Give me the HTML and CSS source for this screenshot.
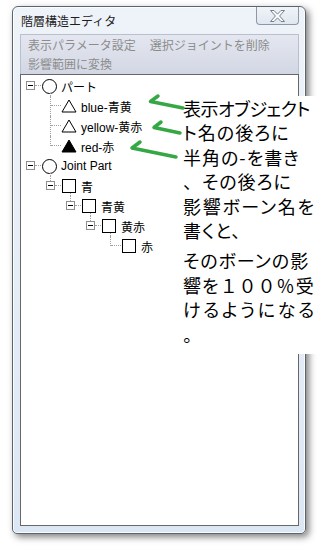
FILE: index.html
```html
<!DOCTYPE html>
<html lang="ja">
<head>
    <meta charset="UTF-8">
    <meta name="viewport" content="width=device-width, initial-scale=1.0">
    <title>階層構造エディタ</title>
    <link rel="stylesheet" href="styles.css">
</head>
<body>
    <div class="page">
        <div class="window">
            <div class="titlebar">
                <span class="title">階層構造エディタ</span>
                <button class="close" aria-label="閉じる">
                    <svg width="15" height="12" viewBox="0 0 15 12">
                        <polygon points="0.5,0.5 4,0.5 7.5,4.1 11,0.5 14.5,0.5 9.6,6 14.5,11.5 11,11.5 7.5,7.9 4,11.5 0.5,11.5 5.4,6" fill="#f7f9fb" stroke="#76808d" stroke-width="1" stroke-linejoin="round"/>
                    </svg>
                </button>
            </div>

            <div class="client">
                <div class="menubar">
                    <span class="menu-item">表示パラメータ設定</span>
                    <span class="menu-item">選択ジョイントを削除</span>
                    <span class="menu-item">影響範囲に変換</span>
                </div>

                <ul class="tree">
                    <li class="node lv0 open">
                        <span class="branch root"><span class="box"></span></span>
                        <span class="icon"><span class="circle"></span></span>
                        <span class="label">パート</span>
                    </li>
                    <li class="node lv1">
                        <span class="branch leaf mid"></span>
                        <span class="icon">
                            <svg width="16" height="14" viewBox="0 0 16 14"><polygon points="8,1 15,13 1,13" fill="#fff" stroke="#000" stroke-width="1"/></svg>
                        </span>
                        <span class="label">blue-青黄</span>
                    </li>
                    <li class="node lv1">
                        <span class="branch leaf mid"></span>
                        <span class="icon">
                            <svg width="16" height="14" viewBox="0 0 16 14"><polygon points="8,1 15,13 1,13" fill="#fff" stroke="#000" stroke-width="1"/></svg>
                        </span>
                        <span class="label">yellow-黄赤</span>
                    </li>
                    <li class="node lv1">
                        <span class="branch leaf"></span>
                        <span class="icon">
                            <svg width="16" height="14" viewBox="0 0 16 14"><polygon points="8,1 15,13 1,13" fill="#000" stroke="#000" stroke-width="1"/></svg>
                        </span>
                        <span class="label">red-赤</span>
                    </li>
                    <li class="node lv0 open">
                        <span class="branch root"><span class="box"></span></span>
                        <span class="icon"><span class="circle"></span></span>
                        <span class="label">Joint Part</span>
                    </li>
                    <li class="node lv1 open">
                        <span class="branch sub"><span class="box"></span></span>
                        <span class="icon"><span class="square"></span></span>
                        <span class="label">青</span>
                    </li>
                    <li class="node lv2 open">
                        <span class="branch sub"><span class="box"></span></span>
                        <span class="icon"><span class="square"></span></span>
                        <span class="label">青黄</span>
                    </li>
                    <li class="node lv3 open">
                        <span class="branch sub"><span class="box"></span></span>
                        <span class="icon"><span class="square"></span></span>
                        <span class="label">黄赤</span>
                    </li>
                    <li class="node lv4">
                        <span class="branch leaf"></span>
                        <span class="icon"><span class="square"></span></span>
                        <span class="label">赤</span>
                    </li>
                </ul>
            </div>
        </div>

        <!-- 説明の書き込み -->
        <div class="note">
            <p><span class="tight">表示オブジェクト</span><br>ト名の後ろに<br>半角の-を書き<br><span class="full">、</span>その後ろに<br><span class="wide">影響ボーン名を</span><br>書くと、</p>
            <p>そのボーンの影<br>響を<span class="full">１００％</span>受<br><span class="wider">けるようになる</span><br>。</p>
        </div>

        <svg class="arrows" width="65" height="75" viewBox="125 90 65 75">
            <path d="M158 96 L150.5 101.5 L183 108"/>
            <path d="M161 122 L154 127.5 L180 133"/>
            <path d="M140 142 L132 148 L176 157"/>
        </svg>
    </div>
</body>
</html>
```

FILE: styles.css
```css
body {
    margin: 0;
    background: #fff;
    font-family: "Noto Sans CJK JP", sans-serif;
}
.page {
    position: relative;
    width: 328px;
    height: 547px;
    padding: 6px 0 0 12px;
    box-sizing: border-box;
    overflow: hidden;
}

/* ウィンドウ枠 */
.window {
    width: 294px;
    height: 528px;
    box-sizing: border-box;
    border: 1px solid #5d646e;
    border-radius: 6px 6px 5px 5px;
    padding: 0 6px 7px 7px;
    background: linear-gradient(#eef3f9, #dce7f4);
    box-shadow: inset 0 0 0 1px rgba(255, 255, 255, 0.8), 3px 3px 7px rgba(0, 0, 0, 0.5);
    display: flex;
    flex-direction: column;
}
.titlebar {
    height: 27px;
    display: flex;
    align-items: flex-start;
    flex-shrink: 0;
}
.title {
    padding: 6px 0 0 1px;
    font-size: 12px;
    line-height: 16px;
    color: #1e1e1e;
}
.close {
    margin-left: auto;
    width: 43px;
    height: 18px;
    padding: 0;
    border: 1px solid #8d98a6;
    border-top: none;
    border-radius: 0 0 4px 4px;
    background: linear-gradient(#f1f4f8, #e0e7f0);
    display: flex;
    align-items: center;
    justify-content: center;
}

.client {
    flex: 1;
    display: flex;
    flex-direction: column;
    min-height: 0;
}
.menubar {
    height: 40px;
    box-sizing: border-box;
    border: 1px solid #b9bfcc;
    border-bottom: none;
    background: linear-gradient(#e4e7f0, #d3d7e4);
    display: flex;
    flex-wrap: wrap;
    align-content: flex-start;
}
.menu-item {
    padding: 0 7px;
    font-size: 12px;
    line-height: 19px;
    color: #8c8c8c;
    white-space: nowrap;
}

/* ツリー */
.tree {
    flex: 1;
    margin: 0;
    padding: 1px 0 0 0;
    list-style: none;
    background: #fff;
    border: 1px solid #676767;
}
.node {
    display: flex;
    align-items: center;
    height: 20px;
    font-family: "Liberation Sans", "Noto Sans CJK JP", sans-serif;
    font-size: 12px;
    color: #000;
}
.lv1 { padding-left: 20px; }
.lv2 { padding-left: 40px; }
.lv3 { padding-left: 60px; }
.lv4 { padding-left: 80px; }

.branch {
    position: relative;
    width: 20px;
    height: 20px;
    flex-shrink: 0;
}
.branch::before,
.branch::after {
    content: "";
    position: absolute;
}
.box {
    position: absolute;
    left: 5px;
    top: 5px;
    width: 9px;
    height: 9px;
    box-sizing: border-box;
    border: 1px solid #8e8e8e;
    background: #fff;
}
.box::after {
    content: "";
    position: absolute;
    left: 1px;
    top: 3px;
    width: 5px;
    height: 1px;
    background: #000;
}
.root::after,
.sub::after {
    left: 14px;
    top: 9px;
    width: 6px;
    border-top: 1px dotted #a0a0a0;
}
.sub::before {
    left: 9px;
    top: 0;
    height: 5px;
    border-left: 1px dotted #a0a0a0;
}
.leaf::before {
    left: 9px;
    top: 0;
    height: 10px;
    border-left: 1px dotted #a0a0a0;
}
.leaf.mid::before {
    height: 20px;
}
.leaf::after {
    left: 10px;
    top: 9px;
    width: 10px;
    border-top: 1px dotted #a0a0a0;
}

.icon {
    position: relative;
    width: 16px;
    height: 20px;
    flex-shrink: 0;
    display: flex;
    align-items: center;
    justify-content: center;
}
.open .icon::after {
    content: "";
    position: absolute;
    left: 9px;
    top: 17px;
    height: 3px;
    border-left: 1px dotted #a0a0a0;
}
.circle {
    width: 15px;
    height: 15px;
    box-sizing: border-box;
    border: 1px solid #000;
    border-radius: 50%;
}
.square {
    width: 14px;
    height: 14px;
    box-sizing: border-box;
    border: 1px solid #000;
}
.label {
    margin-left: 4px;
    white-space: nowrap;
}

/* 書き込み */
.note {
    position: absolute;
    left: 179px;
    top: 96px;
    width: 149px;
    height: 258px;
    box-sizing: border-box;
    padding: 0 0 0 4px;
    background: #fff;
    font-size: 18px;
    line-height: 24.4px;
    letter-spacing: 1px;
    font-feature-settings: "palt";
    color: #000;
    white-space: nowrap;
}
.note p {
    margin: 0;
}
.note p + p {
    margin-top: 6px;
}
.note .tight {
    letter-spacing: -0.5px;
}
.note .wide {
    letter-spacing: 1.7px;
}
.note .wider {
    letter-spacing: 2.6px;
}
.note .full {
    font-feature-settings: normal;
    letter-spacing: 1px;
}
.arrows {
    position: absolute;
    left: 125px;
    top: 90px;
}
.arrows path {
    fill: none;
    stroke: #35a845;
    stroke-width: 3.5;
    stroke-linecap: round;
    stroke-linejoin: round;
}
```
